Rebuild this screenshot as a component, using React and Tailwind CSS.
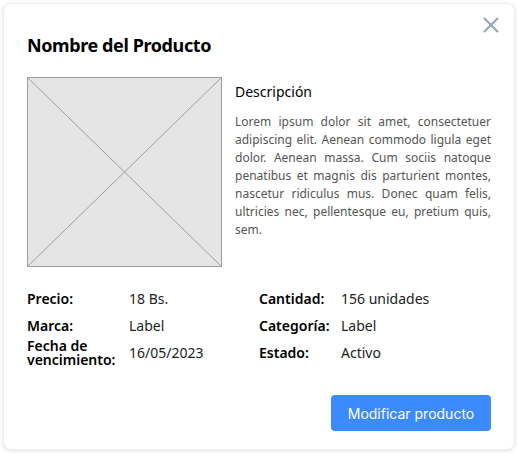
import { X } from 'lucide-react'

const LEFT = [
  ['Precio:', '18 Bs.'],
  ['Marca:', 'Label'],
  ['Fecha de vencimiento:', '16/05/2023'],
]

const RIGHT = [
  ['Cantidad:', '156 unidades'],
  ['Categoría:', 'Label'],
  ['Estado:', 'Activo'],
]

function Field({ label, value, labelW }) {
  return (
    <div className="flex items-center min-h-[27px]">
      <span className={`${labelW} shrink-0 text-[14px] leading-[14px] font-semibold text-black`}>{label}</span>
      <span className="text-[14px] leading-[18px] text-[#222]">{value}</span>
    </div>
  )
}

function Placeholder() {
  return (
    <div className="w-[195px] h-[190px] shrink-0 bg-[#e5e5e5] border border-[#9e9e9e]">
      <svg width="100%" height="100%" viewBox="0 0 193 188" preserveAspectRatio="none">
        <line x1="0" y1="0" x2="193" y2="188" stroke="#9e9e9e" strokeWidth="1" />
        <line x1="193" y1="0" x2="0" y2="188" stroke="#9e9e9e" strokeWidth="1" />
      </svg>
    </div>
  )
}

export default function App() {
  return (
    <div className="w-[518px] h-[455px] bg-white p-[3px] font-['Noto_Sans',sans-serif]">
      <div className="relative w-[512px] h-[447px] rounded-lg bg-white border border-[#eeeeee] shadow-[0_1px_4px_rgba(0,0,0,0.12)] pl-[23px] pr-[23px] pt-[30px]">
        <button className="absolute right-[10px] top-[8px] text-[#94a3b8]">
          <X size={26} strokeWidth={1.8} />
        </button>

        <h1 className="text-[18px] leading-[22px] font-bold tracking-[-0.4px] text-black">Nombre del Producto</h1>

        {/* Image + description */}
        <div className="flex gap-[13px] mt-[21px]">
          <Placeholder />
          <div className="flex-1 pt-[5px]">
            <h2 className="text-[14px] leading-[20px] text-black">Descripción</h2>
            <p className="mt-[11px] text-[12px] leading-[18px] text-[#555] text-justify">
              Lorem ipsum dolor sit amet, consectetuer adipiscing elit. Aenean commodo ligula eget dolor. Aenean massa.
              Cum sociis natoque penatibus et magnis dis parturient montes, nascetur ridiculus mus. Donec quam felis,
              ultricies nec, pellentesque eu, pretium quis, sem.
            </p>
          </div>
        </div>

        {/* Details */}
        <div className="grid grid-cols-[232px_1fr] mt-[18px]">
          <div className="flex flex-col">
            {LEFT.map(([l, v]) => <Field key={l} label={l} value={v} labelW="w-[102px]" />)}
          </div>
          <div className="flex flex-col">
            {RIGHT.map(([l, v]) => <Field key={l} label={l} value={v} labelW="w-[82px]" />)}
          </div>
        </div>

        <div className="flex justify-end mt-[28px]">
          <button className="w-[160px] h-[36px] rounded-[4px] bg-[#3b8bff] text-white text-[14px] font-['Inter',sans-serif]">
            Modificar producto
          </button>
        </div>
      </div>
    </div>
  )
}
